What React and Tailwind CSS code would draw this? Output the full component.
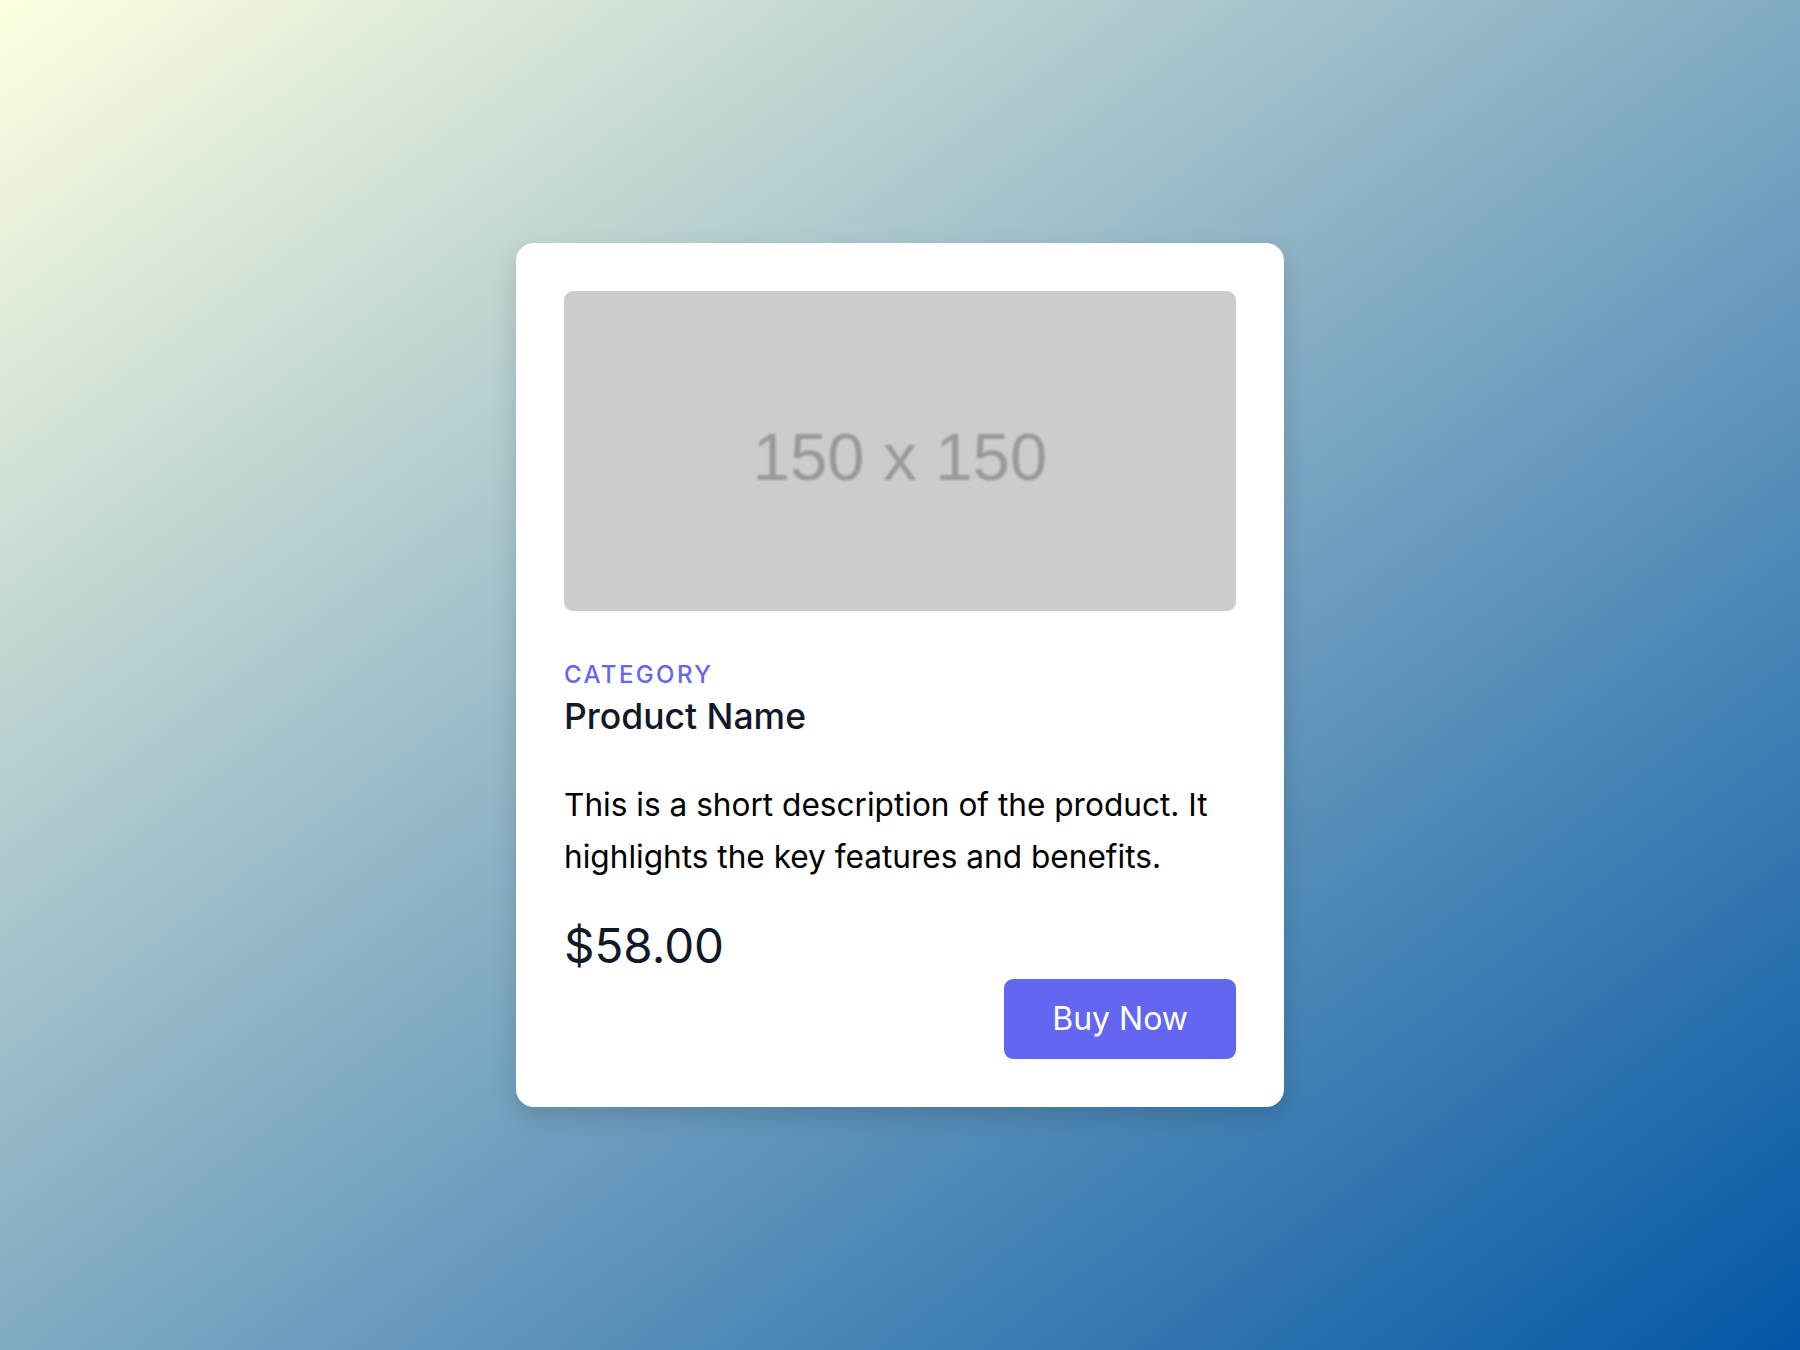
export default function App() {
  return (
    <div
      className="min-h-screen w-full flex items-center justify-center bg-[linear-gradient(to_bottom_right,#feffe0,#0457a6)]"
      style={{ fontFamily: 'Inter, "Noto Sans", sans-serif' }}
    >
      <div className="w-[768px] bg-white rounded-[18px] p-12 shadow-[0_10px_25px_rgba(0,0,0,0.15)] flex flex-col">
        {/* placeholder image */}
        <div className="h-[320px] w-full rounded-[9px] bg-[#cccccc] flex items-center justify-center overflow-hidden">
          <span
            className="text-[67px] text-[#999999] blur-[1px] pt-[12px]"
            style={{ fontFamily: '"Liberation Sans", Arial, sans-serif' }}
          >
            150 x 150
          </span>
        </div>

        <div className="mt-[48px] text-[24px] leading-[32px] tracking-[0.1em] uppercase text-[#6366f1] font-medium">
          Category
        </div>
        <h2 className="mt-[6px] text-[35.5px] leading-[40px] font-medium text-[#111827]">
          Product Name
        </h2>

        <p className="mt-[42px] text-[31.6px] leading-[52px] text-black">
          This is a short description of the product. It highlights the key features and benefits.
        </p>

        <div className="mt-[39px] text-[47.5px] leading-[48px] text-[#111827]">$58.00</div>

        <button className="self-end mt-[9px] h-[80px] px-12 rounded-[9px] bg-[#6366f1] text-white text-[32px]">
          Buy Now
        </button>
      </div>
    </div>
  )
}
